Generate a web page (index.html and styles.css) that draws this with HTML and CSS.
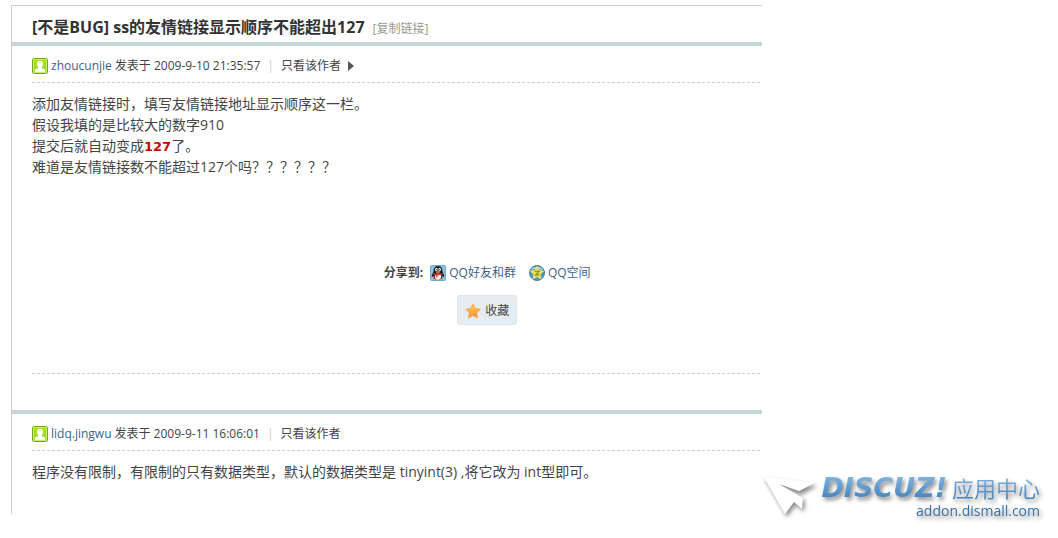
FILE: index.html
```html
<!DOCTYPE html>
<html lang="zh-CN">
<head>
    <meta charset="UTF-8">
    <meta name="viewport" content="width=device-width, initial-scale=1.0">
    <title>ss的友情链接显示顺序不能超出127</title>
    <link rel="stylesheet" href="styles.css">
</head>
<body>
    <div class="page">
        <main class="thread">
            <!-- Thread title -->
            <header class="thread-title">
                <h1>[不是BUG] ss的友情链接显示顺序不能超出127</h1>
                <a href="#" class="copy-link">[复制链接]</a>
            </header>

            <!-- First post -->
            <article class="post">
                <div class="post-info">
                    <svg class="user-icon" width="16" height="16" viewBox="0 0 16 16" aria-hidden="true">
                        <rect x="0.5" y="0.5" width="15" height="15" rx="1.5" fill="#a5d92a" stroke="#78a818"/>
                        <rect x="1.5" y="1.5" width="13" height="13" fill="none" stroke="#c8ec70"/>
                        <path d="M8 2.5c-2 0-3 1.400-3 3.200 0 1.500.6 2.500 1.400 3.100L6 10.300 3 11.500V14h10v-2.500l-3-1.200-.4-1.500C10.400 8.200 11 7.200 11 5.700c0-1.800-1-3.200-3-3.200z" fill="#fff"/>
                    </svg>
                    <a href="#" class="user">zhoucunjie</a>
                    <span>发表于 2009-9-10 21:35:57</span>
                    <span class="pipe">|</span>
                    <a href="#">只看该作者</a>
                    <svg class="arrow" width="6" height="10" viewBox="0 0 6 10" aria-hidden="true">
                        <path d="M0 0l6 5-6 5z" fill="#555"/>
                    </svg>
                </div>
                <div class="post-text">
                    <p>添加友情链接时，填写友情链接地址显示顺序这一栏。</p>
                    <p>假设我填的是比较大的数字910</p>
                    <p>提交后就自动变成<strong>127</strong>了。</p>
                    <p>难道是友情链接数不能超过127个吗？？？？？？</p>
                </div>
                <div class="post-actions">
                    <div class="share">
                        <b>分享到:</b>
                        <a href="#">
                            <svg width="16" height="16" viewBox="0 0 16 16" aria-hidden="true">
                                <rect x="0.5" y="0.5" width="15" height="15" rx="1" fill="#8ec3df" stroke="#6faccb"/>
                                <path d="M3.500 6.500C3.500 2.800 5.200 1 8 1s4.500 1.800 4.500 5.500L14.500 11l-1 1-1.200-1.200L12 14H4l-.3-3.200L2.500 12l-1-1z" fill="#17202a"/>
                                <ellipse cx="8" cy="11.500" rx="3.200" ry="3" fill="#fff"/>
                                <ellipse cx="6.400" cy="4.500" rx="1.300" ry="1.700" fill="#fff"/>
                                <ellipse cx="9.600" cy="4.500" rx="1.300" ry="1.700" fill="#fff"/>
                                <circle cx="6.800" cy="4.700" r=".6" fill="#111"/>
                                <circle cx="9.200" cy="4.700" r=".6" fill="#111"/>
                                <ellipse cx="8" cy="7" rx="2.400" ry=".8" fill="#f3a21b"/>
                                <path d="M3.500 8c3 1.400 6 1.400 9 0l.4 1.300c-1.800.8-3.400 1-5.400 1v1.900H5.800v-2L3.200 9.400z" fill="#d8352a"/>
                                <path d="M3 14.500c0-1.300 4.500-1.300 4.700 0zM8.300 14.500c.2-1.300 4.700-1.300 4.700 0z" fill="#ec8e1f"/>
                            </svg>
                            QQ好友和群
                        </a>
                        <a href="#">
                            <svg width="16" height="16" viewBox="0 0 16 16" aria-hidden="true">
                                <circle cx="8" cy="8" r="7.500" fill="#4b9dbb" stroke="#3f87a3"/>
                                <path d="M2 5c2-4 10-4 12 0-3-1.500-9-1.500-12 0z" fill="#bfe3ee"/>
                                <path d="M8 1.300l1.900 4.300 4.700.5-3.500 3.200 1 4.700L8 11.600 3.900 14l1-4.700L1.400 6.100l4.700-.5z" fill="#ffdc4a" stroke="#ffe88a" stroke-width=".6"/>
                                <path d="M5.800 6.300h4.300L6.400 9.900h4" fill="none" stroke="#7d8a1c" stroke-width="1.100"/>
                            </svg>
                            QQ空间
                        </a>
                    </div>
                    <button type="button" class="favorite">
                        <svg width="16" height="16" viewBox="0 0 16 16" aria-hidden="true">
                            <defs>
                                <linearGradient id="star" x1="0" y1="0" x2="0" y2="1">
                                    <stop offset="0" stop-color="#ffd54a"/>
                                    <stop offset="1" stop-color="#f78b3c"/>
                                </linearGradient>
                            </defs>
                            <path d="M8 .9l2.300 4.600 5 .8-3.600 3.500.8 5.200L8 12.600 3.500 15l.8-5.200L.7 6.300l5-.8z" fill="url(#star)" stroke="#f2a047" stroke-width=".8" stroke-linejoin="round"/>
                        </svg>
                        收藏
                    </button>
                </div>
            </article>

            <!-- Second post -->
            <article class="post">
                <div class="post-info">
                    <svg class="user-icon" width="16" height="16" viewBox="0 0 16 16" aria-hidden="true">
                        <rect x="0.5" y="0.5" width="15" height="15" rx="1.5" fill="#a5d92a" stroke="#78a818"/>
                        <rect x="1.5" y="1.5" width="13" height="13" fill="none" stroke="#c8ec70"/>
                        <path d="M8 2.5c-2 0-3 1.400-3 3.200 0 1.500.6 2.500 1.400 3.100L6 10.300 3 11.500V14h10v-2.500l-3-1.200-.4-1.500C10.400 8.200 11 7.200 11 5.700c0-1.800-1-3.200-3-3.200z" fill="#fff"/>
                    </svg>
                    <a href="#" class="user">lidq.jingwu</a>
                    <span>发表于 2009-9-11 16:06:01</span>
                    <span class="pipe">|</span>
                    <a href="#">只看该作者</a>
                </div>
                <div class="post-text">
                    <p>程序没有限制，有限制的只有数据类型，默认的数据类型是 tinyint(3) ,将它改为 int型即可。</p>
                </div>
            </article>
        </main>

        <!-- App center logo -->
        <aside class="brand">
            <svg class="plane" width="56" height="48" viewBox="0 0 56 48" aria-hidden="true">
                <path d="M17 10L53 9 37 18z" fill="#999"/>
                <path d="M1 2L53 9 37 17 17 10 41 24 40 35 32 28 23 40z" fill="#fff"/>
            </svg>
            <div class="brand-text">
                <div class="brand-name">
                    <span class="discuz">DISCUZ!</span>
                    <span class="center">应用中心</span>
                </div>
                <div class="domain">addon.dismall.com</div>
            </div>
        </aside>
    </div>
</body>
</html>
```
FILE: styles.css
```css
* {
    box-sizing: border-box;
}
body {
    margin: 0;
    background: #fff;
    color: #444;
    font: 12px/18px "Open Sans", "Noto Sans CJK SC", sans-serif;
}
h1, p {
    margin: 0;
}
a {
    color: inherit;
    text-decoration: none;
}
.page {
    display: flex;
    padding: 5px 18px 16px 11px;
}
.thread {
    flex: 1;
    min-width: 0;
    margin-bottom: 8px;
    padding-bottom: 32px;
    border-top: 1px solid #cdcdcd;
    border-left: 1px solid #cdcdcd;
}
.thread-title {
    display: flex;
    align-items: baseline;
    gap: 8px;
    height: 36px;
    padding: 7px 20px 0;
}
.thread-title h1 {
    font-size: 16px;
    line-height: 28px;
    color: #333;
}
.copy-link {
    color: #999;
}

/* Posts */
.post {
    padding: 0 2px 0 20px;
    border-top: 4px solid #c2d5d9;
}
.post-info {
    display: flex;
    align-items: center;
    gap: 3px;
    height: 37px;
    padding-top: 4px;
    border-bottom: 1px dashed #cdcdcd;
}
.user {
    color: #3d5f87;
}
.pipe {
    margin: 0 4px;
    color: #ccc;
}
.arrow {
    margin-left: 4px;
}
.post-text {
    padding-top: 10px;
    font-size: 14px;
    line-height: 21px;
}
.post-text strong {
    color: #c00;
    font-family: "DejaVu Sans", sans-serif;
    font-size: 13px;
    line-height: 1;
}
.post-actions {
    display: flex;
    flex-direction: column;
    align-items: center;
    gap: 13px;
    margin-bottom: 36px;
    padding: 87px 0 48px 182px;
    border-bottom: 1px dashed #cdcdcd;
}
.share {
    display: flex;
    align-items: center;
    gap: 13px;
}
.share b {
    margin-right: -6px;
}
.share a {
    display: flex;
    align-items: center;
    gap: 3px;
    color: #3d5f87;
}
.favorite {
    display: flex;
    align-items: center;
    gap: 4px;
    height: 30px;
    padding: 2px 7px 0;
    border: 1px solid #dce5ec;
    border-radius: 3px;
    background: #e5edf2;
    color: #444;
    font: inherit;
}

/* Logo */
.brand {
    display: flex;
    align-self: flex-end;
    gap: 3px;
    filter: drop-shadow(2px 3px 2px rgba(0, 0, 0, .45));
}
.brand-text {
    text-align: right;
}
.brand-name {
    display: flex;
    align-items: center;
    gap: 5px;
    height: 28px;
}
.brand-name span {
    background: linear-gradient(#86b9e4, #3c7db8);
    background-clip: text;
    color: transparent;
}
.discuz {
    font: italic bold 27px/28px "DejaVu Sans", sans-serif;
}
.center {
    font-size: 22px;
    line-height: 28px;
}
.domain {
    color: #3b72a8;
    font-size: 14px;
    line-height: 18px;
}
```
